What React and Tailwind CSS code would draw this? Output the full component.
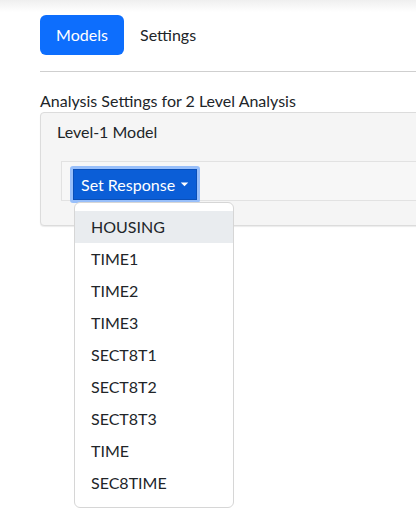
import { useState } from 'react';

const RESPONSES = ['HOUSING', 'TIME1', 'TIME2', 'TIME3', 'SECT8T1', 'SECT8T2', 'SECT8T3', 'TIME', 'SEC8TIME'];

export default function App() {
  const [active] = useState('HOUSING');

  return (
    <div className="relative h-[528px] w-[416px] overflow-hidden bg-white text-[16px] text-[#212529] [font-family:Lato,'Noto_Sans',sans-serif]">
      <div className="h-3 bg-gradient-to-b from-[#efefef] to-white" />
      <div className="w-[460px] pl-10">
        <nav className="flex items-center gap-4 pt-[3px]">
          <button className="h-10 w-[84px] rounded-md bg-[#0d6efd] text-white">Models</button>
          <button className="h-10 px-0 text-[#212529]">Settings</button>
        </nav>
        <hr className="mt-4 border-t border-[#cfcfcf]" />
        <p className="mt-[19px] leading-5">Analysis Settings for 2 Level Analysis</p>
        <div className="mt-[1px] h-[114px] rounded border border-[#dcdcdc] bg-[#f5f5f5] shadow-[0_1px_1px_rgba(0,0,0,0.08)]">
          <p className="mt-[9px] ml-4 leading-5">Level-1 Model</p>
          <div className="relative mt-[19px] ml-5 h-10 border border-[#e2e2e2] bg-[#f7f7f7]">
            <div className="absolute left-2 top-1 rounded-[3px] border-[3px] border-[#98bffa]">
              <button className="flex h-[31px] items-center gap-[5px] border border-[#0a4fb8] bg-[#0b5ed7] px-[7px] text-white">
                Set Response
                <svg width="9" height="5" viewBox="0 0 10 6">
                  <path d="M0.5 0.5 L5 5 L9.5 0.5 Z" fill="white" />
                </svg>
              </button>
            </div>
            <ul className="absolute left-3 top-[40px] z-10 w-[160px] rounded-md border border-[#d6d6d6] bg-white py-2">
              {RESPONSES.map((item) => (
                <li
                  key={item}
                  className={`flex h-8 items-center px-4 ${item === active ? 'bg-[#e9ecef]' : ''}`}
                >
                  {item}
                </li>
              ))}
            </ul>
          </div>
        </div>
      </div>
    </div>
  );
}
